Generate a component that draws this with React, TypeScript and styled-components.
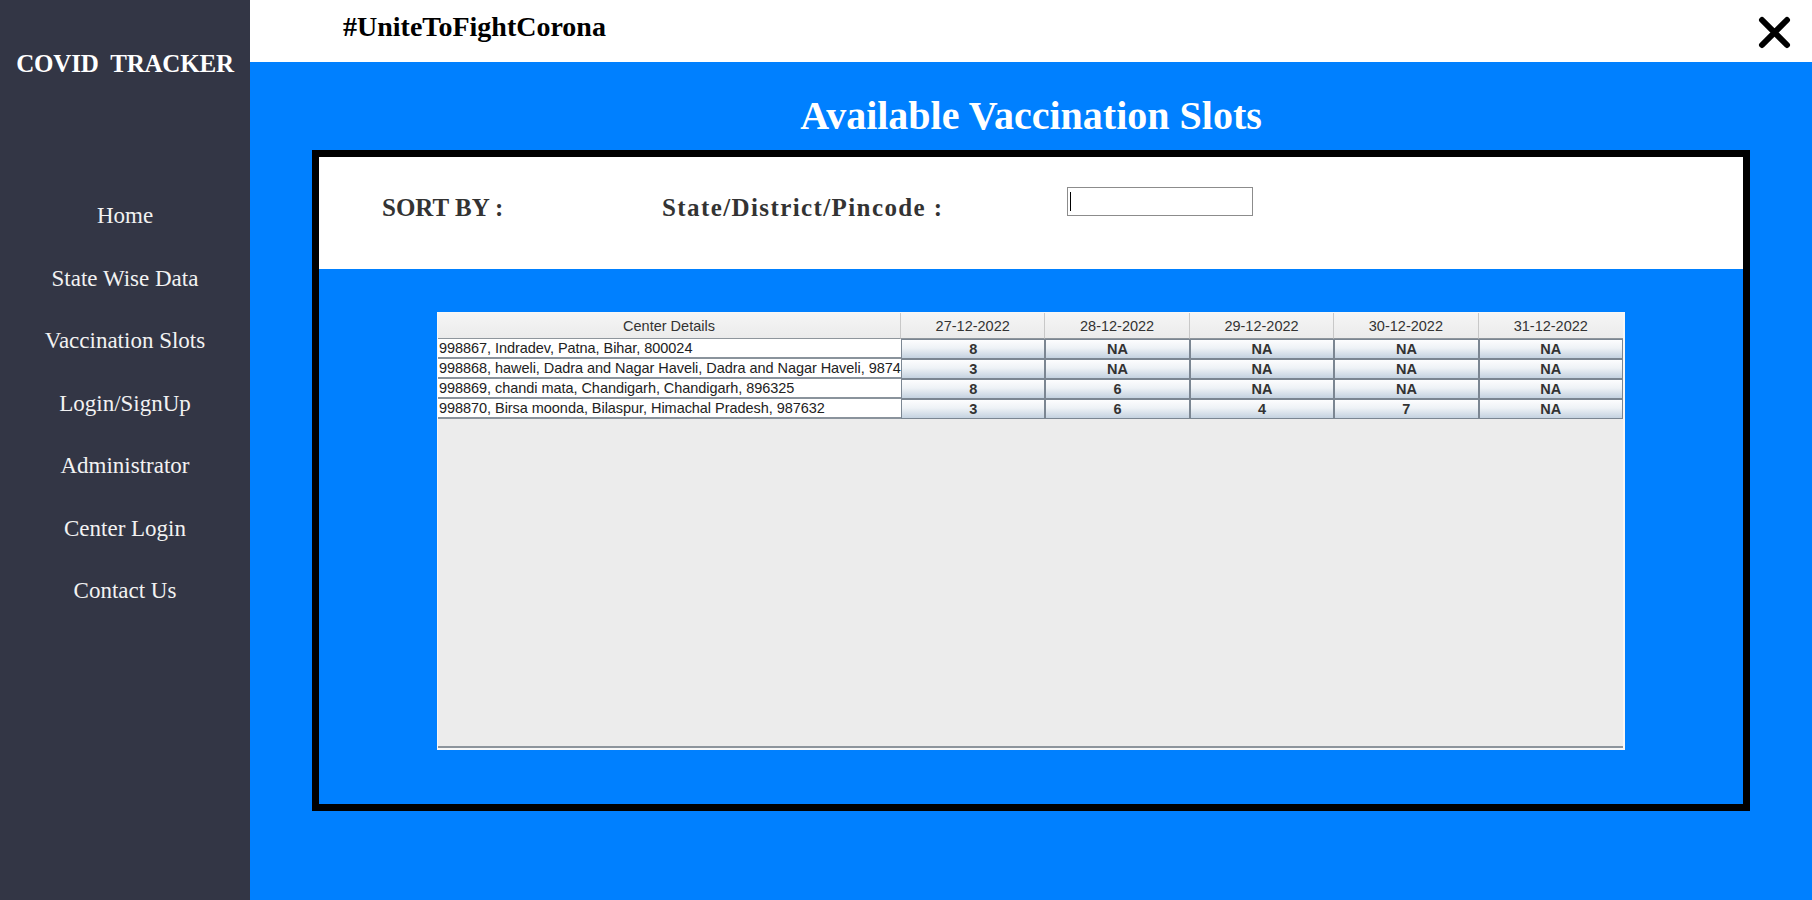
import React from "react";
import styled, { createGlobalStyle } from "styled-components";

const GlobalStyle = createGlobalStyle`
  html, body { margin: 0; padding: 0; }
  body { width: 1812px; height: 900px; overflow: hidden; background: #0080ff; }
  #root { width: 1812px; height: 900px; }
`;

const Page = styled.div`
  display: flex;
  width: 1812px;
  height: 900px;
`;

const Sidebar = styled.aside`
  width: 250px;
  flex: 0 0 250px;
  background: #333645;
  display: flex;
  flex-direction: column;
  align-items: center;
`;

const Brand = styled.div`
  margin-top: 49px;
  font-family: "Liberation Serif", "Times New Roman", serif;
  font-weight: 700;
  font-size: 25px;
  line-height: 30px;
  color: #ffffff;
  white-space: pre;
  letter-spacing: -0.2px;
`;

const Nav = styled.nav`
  margin-top: 106px;
  display: flex;
  flex-direction: column;
  align-items: center;
`;

const NavItem = styled.div`
  height: 62.5px;
  line-height: 62.5px;
  font-family: "Liberation Serif", "Times New Roman", serif;
  font-size: 23px;
  color: #f2f2f2;
`;

const Main = styled.main`
  flex: 1;
  display: flex;
  flex-direction: column;
  background: #0080ff;
`;

const Header = styled.header`
  height: 62px;
  background: #ffffff;
  display: flex;
  justify-content: space-between;
  align-items: flex-start;
  padding: 0 21px 0 93px;
`;

const Tagline = styled.div`
  margin-top: 11px;
  font-family: "Liberation Serif", "Times New Roman", serif;
  font-weight: 700;
  font-size: 28px;
  line-height: 32px;
  color: #000;
`;

const CloseButton = styled.div`
  margin-top: 16px;
  width: 33px;
  height: 33px;
  display: flex;
`;

const Content = styled.section`
  flex: 1;
  display: flex;
  flex-direction: column;
  align-items: center;
  padding-top: 31px;
`;

const Title = styled.h1`
  margin: 0 0 12px;
  font-family: "Liberation Serif", "Times New Roman", serif;
  font-weight: 700;
  font-size: 40px;
  line-height: 45px;
  color: #ffffff;
`;

const Panel = styled.div`
  width: 1438px;
  height: 661px;
  box-sizing: border-box;
  border: 7px solid #000;
  display: flex;
  flex-direction: column;
  background: #0080ff;
`;

const FilterBar = styled.div`
  height: 112px;
  flex: 0 0 112px;
  background: #ffffff;
  display: flex;
  align-items: flex-start;
  padding: 30px 0 0 63px;
  box-sizing: border-box;
`;

const FilterLabel = styled.div<{ $w: number; $spacing?: number }>`
  width: ${(p) => p.$w}px;
  margin-top: 6px;
  font-family: "Liberation Serif", "Times New Roman", serif;
  font-weight: 700;
  font-size: 25px;
  line-height: 30px;
  letter-spacing: ${(p) => p.$spacing ?? 0}px;
  color: #333333;
  white-space: nowrap;
`;

const SearchBox = styled.div`
  width: 186px;
  height: 29px;
  box-sizing: border-box;
  border: 1px solid #8c8c8c;
  background: #fff;
  display: flex;
  align-items: center;
  padding-left: 2px;
`;

const Caret = styled.span`
  width: 1px;
  height: 19px;
  background: #000;
`;

const TableArea = styled.div`
  flex: 1;
  display: flex;
  justify-content: center;
  padding-top: 43px;
`;

const TableFrame = styled.div`
  width: 1188px;
  height: 438px;
  box-sizing: border-box;
  border: 2px solid #f7f7f7;
  border-top-width: 1px;
  border-left-width: 1px;
  background: #ececec;
  display: flex;
  flex-direction: column;
`;

const Viewport = styled.div`
  flex: 1;
  border-bottom: 2px solid #8c949c;
  display: flex;
  flex-direction: column;
`;

const Row = styled.div`
  display: grid;
  grid-template-columns: 463px repeat(5, 1fr);
`;

const HeadCell = styled.div`
  height: 25px;
  line-height: 27px;
  background: linear-gradient(#f5f5f5, #ebebeb);
  border-right: 1px solid #c8c8c8;
  border-bottom: 1px solid #8e959c;
  text-align: center;
  font-family: "Liberation Sans", Arial, sans-serif;
  font-size: 14.5px;
  color: #333;
  &:last-child { border-right: none; }
`;

const TextCell = styled.div`
  height: 18px;
  line-height: 19px;
  background: #fff;
  border-bottom: 2px solid #8a939c;
  padding-left: 1px;
  overflow: hidden;
  white-space: nowrap;
  font-family: "Liberation Sans", Arial, sans-serif;
  font-size: 14.5px;
  letter-spacing: -0.05px;
  color: #222;
`;

const SlotCell = styled.div`
  height: 18px;
  line-height: 19px;
  border: 1px solid #7b8692;
  background: linear-gradient(#fdfdfe 0%, #eef2f6 45%, #c4d2e0 100%);
  text-align: center;
  font-family: "Liberation Sans", Arial, sans-serif;
  font-weight: 700;
  font-size: 14.5px;
  color: #333;
`;

const navItems = [
  "Home",
  "State Wise Data",
  "Vaccination Slots",
  "Login/SignUp",
  "Administrator",
  "Center Login",
  "Contact Us",
];

const dates = ["27-12-2022", "28-12-2022", "29-12-2022", "30-12-2022", "31-12-2022"];

const rows: { center: string; slots: string[] }[] = [
  { center: "998867, Indradev, Patna, Bihar, 800024", slots: ["8", "NA", "NA", "NA", "NA"] },
  {
    center: "998868, haweli, Dadra and Nagar Haveli, Dadra and Nagar Haveli, 9874",
    slots: ["3", "NA", "NA", "NA", "NA"],
  },
  { center: "998869, chandi mata, Chandigarh, Chandigarh, 896325", slots: ["8", "6", "NA", "NA", "NA"] },
  { center: "998870, Birsa moonda, Bilaspur, Himachal Pradesh, 987632", slots: ["3", "6", "4", "7", "NA"] },
];

export default function App() {
  return (
    <>
      <GlobalStyle />
      <Page>
        <Sidebar>
          <Brand>{"COVID  TRACKER"}</Brand>
          <Nav>
            {navItems.map((n) => (
              <NavItem key={n}>{n}</NavItem>
            ))}
          </Nav>
        </Sidebar>
        <Main>
          <Header>
            <Tagline>#UniteToFightCorona</Tagline>
            <CloseButton>
              <svg width="33" height="33" viewBox="0 0 33 33">
                <path d="M4 4 L29 29 M29 4 L4 29" stroke="#000" strokeWidth="6" strokeLinecap="round" />
              </svg>
            </CloseButton>
          </Header>
          <Content>
            <Title>Available Vaccination Slots</Title>
            <Panel>
              <FilterBar>
                <FilterLabel $w={280}>SORT BY :</FilterLabel>
                <FilterLabel $w={405} $spacing={1.4}>
                  State/District/Pincode :
                </FilterLabel>
                <SearchBox>
                  <Caret />
                </SearchBox>
              </FilterBar>
              <TableArea>
                <TableFrame>
                  <Viewport>
                    <Row>
                      <HeadCell>Center Details</HeadCell>
                      {dates.map((d) => (
                        <HeadCell key={d}>{d}</HeadCell>
                      ))}
                    </Row>
                    {rows.map((r) => (
                      <Row key={r.center}>
                        <TextCell>{r.center}</TextCell>
                        {r.slots.map((s, i) => (
                          <SlotCell key={i}>{s}</SlotCell>
                        ))}
                      </Row>
                    ))}
                  </Viewport>
                </TableFrame>
              </TableArea>
            </Panel>
          </Content>
        </Main>
      </Page>
    </>
  );
}
